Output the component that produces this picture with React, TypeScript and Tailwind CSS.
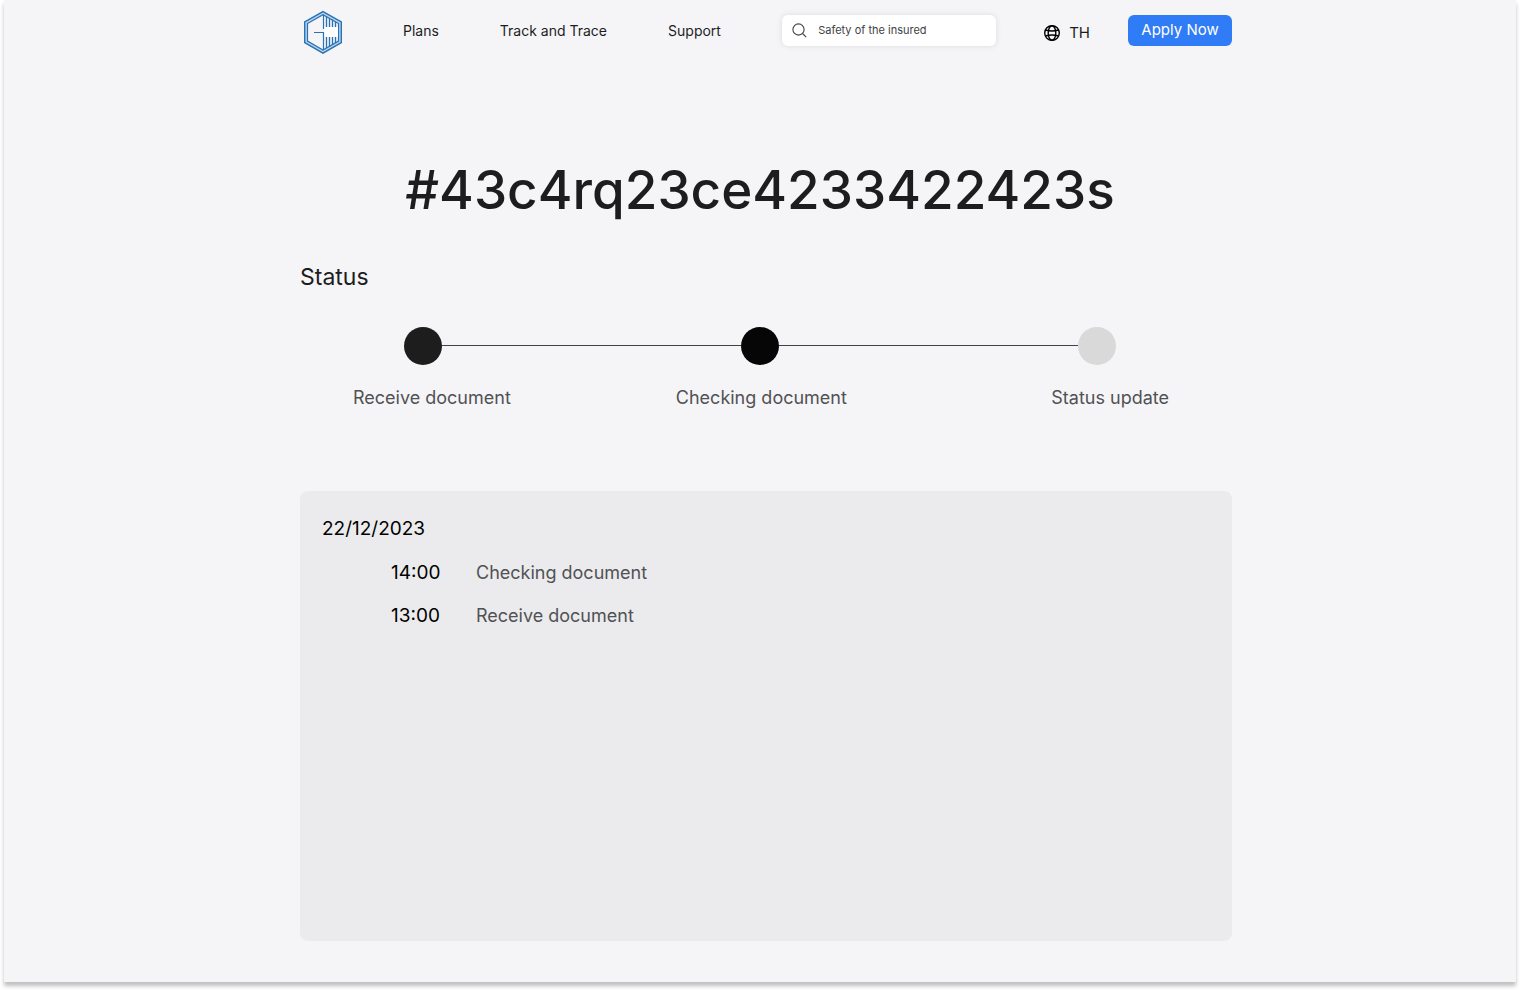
import React from "react";

const events = [
  { time: "14:00", label: "Checking document" },
  { time: "13:00", label: "Receive document" },
];

function Logo() {
  return (
    <svg viewBox="0 0 38 44" className="h-11 w-[38px]" fill="none" stroke="#2a72b5" aria-hidden="true">
      <path d="M19 3 36 12.700v19.600L19 41.800 2 32.300V12.700Z" stroke="#b4d2ea" strokeWidth="3" />
      <path d="M19 1.600 37.300 12v20.700L19 43.200.7 32.700V12Z" strokeWidth="1.400" />
      <path d="M19 4.800 34.500 13.600v17.500L19 40 3.500 31.100V13.600Z" strokeWidth="1.200" />
      <path d="M20 17h14v10H20z" fill="#fff" stroke="none" />
      <path d="M19.500 4.500v14.500M10 22.500h9.500V40" strokeWidth="1.200" />
      <path d="M22.500 6.500V17M25.500 8v9M28.500 9.500V17M31.500 11.500V17M22.500 38V27M25.500 36.500V27M28.500 34.800V27M31.500 33v-6" strokeWidth="1.300" />
    </svg>
  );
}

function Globe() {
  return (
    <svg viewBox="0 0 16 16" className="size-4" fill="none" stroke="#000" strokeWidth="1.400" aria-hidden="true">
      <circle cx="8" cy="8" r="7.300" />
      <ellipse cx="8" cy="8" rx="3.800" ry="7.300" />
      <path d="M1.500 5c4 1.300 9 1.300 13 0M1.500 11c4-1.300 9-1.300 13 0" />
    </svg>
  );
}

export default function App() {
  return (
    <div className="min-h-screen bg-white px-1 pb-2 font-['Inter',sans-serif] text-[#1d1d1f]">
      <div className="min-h-[982px] bg-[#f5f5f7] pb-[41px] shadow-[0_4px_4px_rgba(0,0,0,0.25)]">
        <header className="pl-3">
          <div className="mx-auto flex max-w-[932px] items-center pt-[10px] pl-1">
            <a href="#" aria-label="Home"><Logo /></a>
            <nav className="mb-[2px] ml-[61px] flex gap-[61px] text-[14px] leading-5">
              <a href="#">Plans</a>
              <a href="#">Track and Trace</a>
              <a href="#">Support</a>
            </nav>
            <label className="mb-1 ml-auto flex h-[31px] w-[214px] items-center gap-[11px] rounded-md bg-white pl-[10px] shadow-[0_0_6px_rgba(0,0,0,0.1)]">
              <svg viewBox="0 0 15 15" className="size-[15px] shrink-0" fill="none" stroke="#424245" strokeWidth="1.100" aria-hidden="true">
                <circle cx="6.500" cy="6.500" r="5.600" />
                <path d="m10.500 10.500 3.700 3.700" />
              </svg>
              <input aria-label="Search" defaultValue="Safety of the insured" className="w-full min-w-0 bg-transparent pt-px text-[11px] text-[#424245] outline-none" />
            </label>
            <button className="ml-12 flex items-center gap-[9px] pt-[2px] text-[15px] leading-5">
              <Globe />
              TH
            </button>
            <button className="mb-1 ml-[38px] h-[31px] w-[104px] rounded-md bg-[#2f7cf6] pt-px text-[15px] text-white">Apply Now</button>
          </div>
        </header>

        <main>
          <h1 className="mt-[101px] text-center text-[53px] leading-[70px] font-medium">#43c4rq23ce4233422423s</h1>
          <section className="pl-3">
            <div className="mx-auto max-w-[932px]">
              <h2 className="mt-[36px] text-[23px] leading-8">Status</h2>
              <div className="mt-[34px] mr-[116px] ml-[104px] flex items-center">
                <span className="size-[38px] rounded-full bg-[#1d1d1d]" />
                <span className="mb-[2px] h-px flex-1 bg-[#424245]" />
                <span className="size-[38px] rounded-full bg-[#060606]" />
                <span className="mb-[2px] h-px flex-1 bg-[#424245]" />
                <span className="size-[38px] rounded-full bg-[#d9d9d9]" />
              </div>
              <ol className="mt-5 mr-[63px] ml-[53px] flex text-[18px] leading-[26px] text-[#515154]">
                <li>Receive document</li>
                <li className="ml-[165px]">Checking document</li>
                <li className="ml-auto">Status update</li>
              </ol>
              <div className="mt-20 min-h-[450px] rounded-lg bg-[#ebebed] px-[22px] pt-[25px] leading-[26px]">
                <h3 className="text-[19px] text-black">22/12/2023</h3>
                <ul className="mt-[18px] ml-[69px] flex flex-col gap-[17px]">
                  {events.map((e) => (
                    <li key={e.time} className="flex items-baseline">
                      <time className="w-[85px] text-[19px] text-black">{e.time}</time>
                      <span className="text-[18px] text-[#515154]">{e.label}</span>
                    </li>
                  ))}
                </ul>
              </div>
            </div>
          </section>
        </main>
      </div>
    </div>
  );
}
